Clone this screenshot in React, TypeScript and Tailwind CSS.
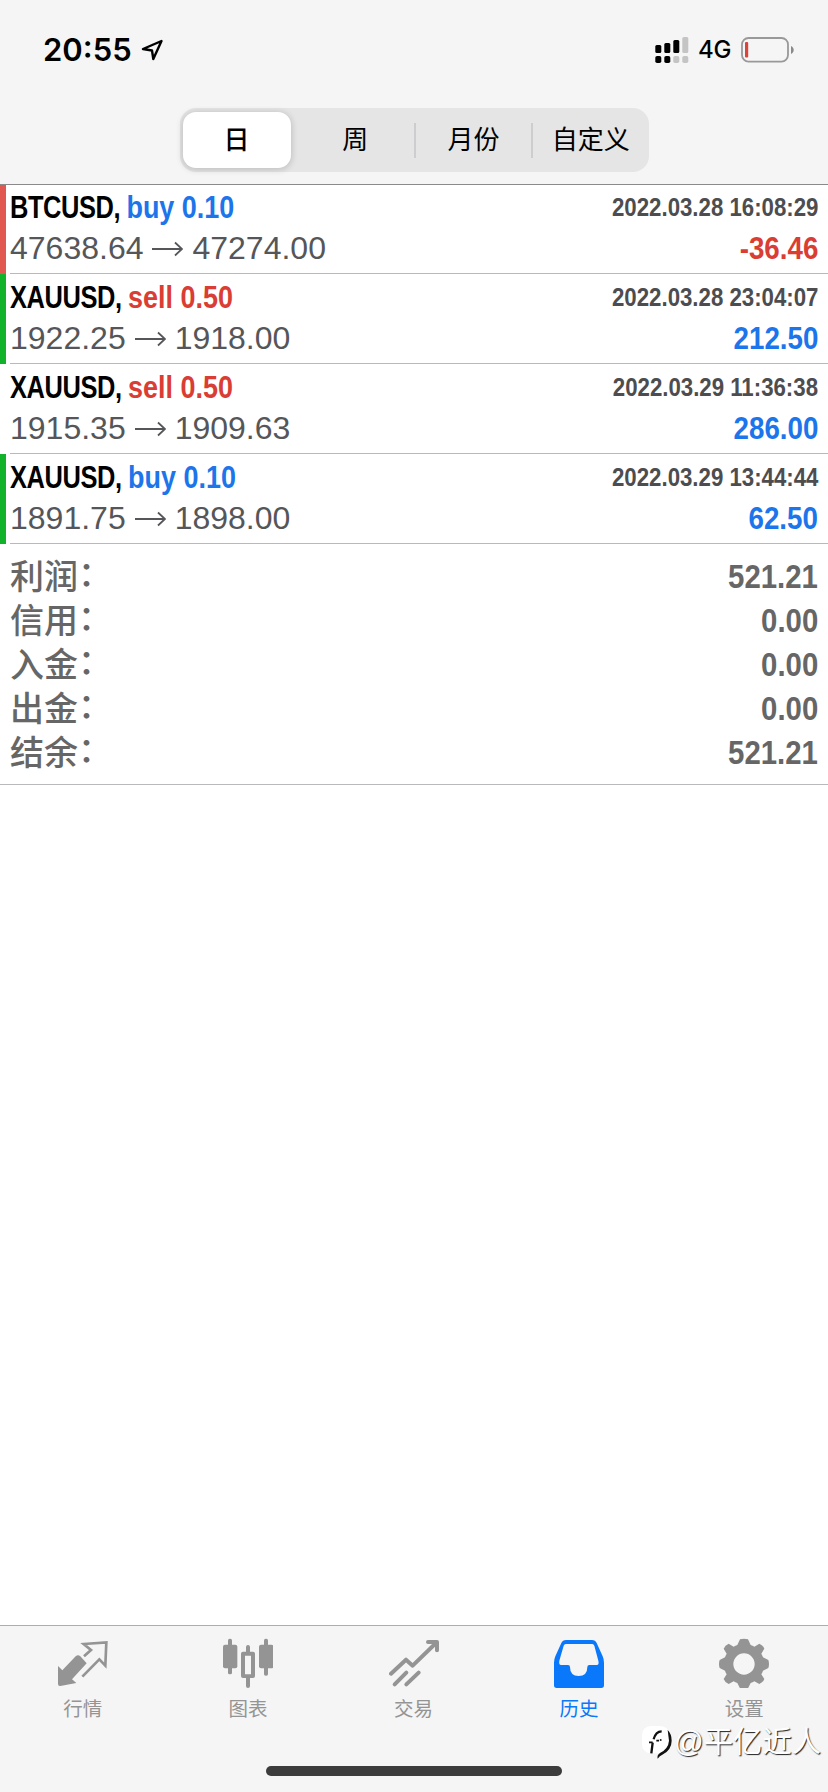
import { clsx } from "clsx";
import type { ReactNode } from "react";

const deals = [
  { symbol: "BTCUSD", side: "buy", volume: "0.10", open: "47638.64", close: "47274.00", time: "2022.03.28 16:08:29", profit: "-36.46", bar: "red" },
  { symbol: "XAUUSD", side: "sell", volume: "0.50", open: "1922.25", close: "1918.00", time: "2022.03.28 23:04:07", profit: "212.50", bar: "green" },
  { symbol: "XAUUSD", side: "sell", volume: "0.50", open: "1915.35", close: "1909.63", time: "2022.03.29 11:36:38", profit: "286.00", bar: "" },
  { symbol: "XAUUSD", side: "buy", volume: "0.10", open: "1891.75", close: "1898.00", time: "2022.03.29 13:44:44", profit: "62.50", bar: "green" },
] as const;

const totals = [
  { label: "利润", value: "521.21" },
  { label: "信用", value: "0.00" },
  { label: "入金", value: "0.00" },
  { label: "出金", value: "0.00" },
  { label: "结余", value: "521.21" },
];

const periods = ["日", "周", "月份", "自定义"];

function StatusBar() {
  return (
    <div className="flex h-[108px] justify-between pt-[27px] pr-[33px] pl-[43px] font-['Inter',sans-serif]">
      <div className="flex h-[46px] items-center">
        <span className="w-[98px] text-[31px] leading-[46px] font-semibold">20:55</span>
        <svg className="h-[22px] w-[22px]" viewBox="0 0 22 22" fill="none" stroke="#000" strokeWidth="2.4" strokeLinejoin="round">
          <path d="M20.5 2 L2 10 L11 11.5 L12.3 20 Z" />
        </svg>
      </div>
      <div className="flex h-[46px] items-center">
        <svg className="h-[26px] w-[34px]" viewBox="0 0 34 26">
          <rect x="0.3" y="8" width="6" height="8" rx="1.5" />
          <rect x="9.3" y="6" width="6" height="10" rx="1.5" />
          <rect x="18.3" y="3" width="6" height="13" rx="1.5" />
          <rect x="27.3" y="0" width="6" height="16" rx="1.5" fill="#c4c4c4" />
          <rect x="0.3" y="19" width="6" height="7" rx="1.8" />
          <rect x="9.3" y="19" width="6" height="7" rx="1.8" />
          <rect x="18.3" y="19" width="6" height="7" rx="1.8" fill="#c4c4c4" />
          <rect x="27.3" y="19" width="6" height="7" rx="1.8" fill="#c4c4c4" />
        </svg>
        <span className="ml-[9px] w-[43px] text-[24px] leading-[46px] font-medium tracking-[-0.2px]">4G</span>
        <svg className="h-[26px] w-[54px]" viewBox="0 0 54 26">
          <rect x="1" y="1" width="46" height="23.6" rx="6.5" fill="none" stroke="#999" strokeWidth="1.8" />
          <rect x="4" y="5" width="3.2" height="15.5" rx="1" fill="#d8453c" />
          <path d="M50 9 C53.6 10.5 53.6 15.5 50 17 Z" fill="#8a8a8a" />
        </svg>
      </div>
    </div>
  );
}

function PeriodPicker() {
  return (
    <div className="mx-auto flex h-16 w-[469px] rounded-[16px] bg-[#e5e5e6] text-[26px]">
      {periods.map((period, i) => (
        <div key={period} className="flex flex-1 items-center">
          {i > 1 && <div className="h-[35px] w-0.5 bg-[#cdcdcf]" />}
          <div
            className={clsx(
              "flex h-14 flex-1 items-center justify-center pt-px",
              i === 0 && "ml-[3px] mr-[6px] rounded-[13px] bg-white font-medium shadow-[0_1px_6px_1px_rgba(0,0,0,0.16)]",
            )}
          >
            {period}
          </div>
        </div>
      ))}
    </div>
  );
}

function DealRow({ deal, first }: { deal: (typeof deals)[number]; first: boolean }) {
  return (
    <div className={clsx("flex", first ? "h-[89px]" : "h-[90px]")}>
      <div className={clsx("w-1.5", deal.bar === "red" && "bg-[#e0584f]", deal.bar === "green" && "bg-[#12b32a]")} />
      <div className="ml-1 flex flex-1 flex-col justify-end border-b border-[#b9b9bb] pr-[10px] pb-1">
        <div className="flex h-[41px] items-center justify-between font-bold">
          <div className="origin-left scale-x-[0.82] text-[31px] leading-[41px] tracking-[-0.5px] whitespace-nowrap">
            {deal.symbol},{" "}
            <span
              className={clsx(
                "inline-block origin-left scale-x-[1.06] tracking-normal",
                deal.side === "buy" ? "text-[#1c75ea]" : "text-[#da3d33]",
              )}
            >
              {deal.side} {deal.volume}
            </span>
          </div>
          <div className="origin-right scale-x-[0.855] text-[26px] leading-[41px] whitespace-nowrap text-[#4d4d4f]">{deal.time}</div>
        </div>
        <div className="flex h-[41px] items-center justify-between">
          <div className="flex items-center text-[32px] leading-[41px] text-[#55565a]">
            {deal.open}
            <svg className="mx-[9px] h-4 w-[31px]" viewBox="0 0 31 16" fill="none" stroke="#55565a" strokeWidth="1.8">
              <path d="M0 8 H30 M23 1.5 L30 8 L23 14.5" />
            </svg>
            {deal.close}
          </div>
          <div
            className={clsx(
              "origin-right scale-x-[0.88] text-[31.5px] leading-[41px] font-bold",
              deal.profit.startsWith("-") ? "text-[#da3d33]" : "text-[#1c75ea]",
            )}
          >
            {deal.profit}
          </div>
        </div>
      </div>
    </div>
  );
}

function Tab({ label, box, active, children }: { label: string; box: string; active?: boolean; children: ReactNode }) {
  return (
    <div className={clsx("flex flex-1 flex-col items-center pt-3", active ? "text-[#0a78fa]" : "text-[#949494]")}>
      <svg className="h-[50px] w-[50px]" viewBox={box} fill="currentColor">
        {children}
      </svg>
      <span className="mt-[7px] text-[19.5px] leading-[28px]">{label}</span>
    </div>
  );
}

function TabBar() {
  return (
    <div className="relative flex h-[167px] flex-col justify-between border-t border-[#adadad] bg-[#f5f5f5] pb-4">
      <div className="flex pr-px">
        <Tab label="行情" box="171 84 150 150">
          <path d="M171 168 L184 181 L224 139 Q231 132 238 139 L257 160 L213 208 L226 219 L178 228 Q171 229 171 221 Z" />
          <path d="M249 139 L270 120 L248 102 L316 97 L313 167 L295 148 L244 200" fill="none" stroke="currentColor" strokeWidth="8" />
        </Tab>
        <Tab label="图表" box="669 84 150 150">
          <rect x="669" y="104" width="43" height="71" rx="6" />
          <rect x="684" y="86" width="12" height="107" rx="5" />
          <rect x="777" y="104" width="43" height="71" rx="6" />
          <rect x="792" y="86" width="12" height="111" rx="5" />
          <path d="M738 125 V111 Q738 105 744 105 Q750 105 750 111 V125 H759 Q765 125 765 131 V198 Q765 204 759 204 H750 V228 Q750 234 744 234 Q738 234 738 228 V204 H729 Q723 204 723 198 V131 Q723 125 729 125 Z M735 137 V193 H753 V137 Z" fillRule="evenodd" />
        </Tab>
        <Tab label="交易" box="264 84 150 150">
          <g fill="none" stroke="currentColor" strokeWidth="12" strokeLinecap="round" strokeLinejoin="round">
            <path d="M270 191 L315 149 L335 167 L405 99" />
            <path d="M381 96 H408 V121" />
            <path d="M281 223 L316 188 M316 223 L353 188" />
          </g>
        </Tab>
        <Tab label="历史" box="759 84 150 150" active>
          <path d="M795 90 H873 Q883 90 887 99 L905 139 Q909 148 909 158 V226 Q909 234 901 234 H767 Q759 234 759 226 V158 Q759 148 763 139 L781 99 Q785 90 795 90 Z M794 102 Q790 102 788 107 L775 152 Q773 165 780 165 H801 Q807 165 807 171 Q807 198 833 198 Q859 198 859 171 Q859 165 865 165 H887 Q895 165 892 152 L880 107 Q878 102 874 102 Z" fillRule="evenodd" />
        </Tab>
        <Tab label="设置" box="357 84 150 150">
          <path
            d="M420 88 Q432 85 444 88 L452 105 Q458 107 463 110 L478 101 Q489 105 493 116 L484 131 Q487 136 489 142 L505 150 Q509 162 505 174 L489 182 Q487 188 484 193 L493 207 Q489 218 478 222 L463 214 Q458 217 452 219 L444 235 Q432 238 420 235 L412 219 Q406 217 401 214 L386 222 Q375 218 371 207 L380 193 Q377 188 375 182 L359 174 Q355 162 359 150 L375 142 Q377 136 380 131 L371 116 Q375 105 386 101 L401 110 Q406 107 412 105 Z M432 130 A32 32 0 1 0 432 194 A32 32 0 1 0 432 130 Z"
            fillRule="evenodd"
          />
        </Tab>
      </div>
      <div className="mx-auto h-[10px] w-[296px] rounded-full bg-[#3c3c3c]" />
      <div className="absolute top-[98px] right-[7px] flex items-center">
        <svg className="h-[36px] w-[33px]" viewBox="0 0 99 108">
          <rect x="3" y="6" width="82" height="82" rx="26" fill="#fff" />
          <path d="M31 88 L35 56 M38 46 Q44 22 62 22" fill="none" stroke="#111" strokeWidth="7" />
          <path d="M24 55 H35 M46 50 H54" fill="none" stroke="#111" strokeWidth="5" />
          <path d="M80 18 Q92 30 92 50 Q92 78 64 92 Q56 95 50 104 Q47 92 58 86 Q82 74 84 50 Z" fill="#111" />
          <circle cx="59" cy="48" r="3" fill="#222" />
        </svg>
        <span className="text-[29.3px] leading-[36px] text-white [text-shadow:1px_1px_1px_#222]">@平亿近人</span>
      </div>
    </div>
  );
}

export default function App() {
  return (
    <div className="flex h-[1792px] w-[828px] flex-col bg-white font-['Liberation_Sans','Noto_Sans_CJK_SC',sans-serif] text-black">
      <header className="h-[185px] border-b border-[#8a8a8a] bg-[#f5f5f5]">
        <StatusBar />
        <PeriodPicker />
      </header>

      <main className="flex-1">
        {deals.map((deal, i) => (
          <DealRow key={deal.time} deal={deal} first={i === 0} />
        ))}
        <div className="h-[241px] border-b border-[#b9b9bb] pt-[11px] pr-[10px] pl-[10px] text-[#666]">
          {totals.map((row) => (
            <div key={row.label} className="flex h-11 items-center justify-between">
              <div className="text-[34px] leading-[44px] font-medium">
                {row.label}
                <span className="relative -top-[3px]">：</span>
              </div>
              <div className="origin-right scale-x-[0.89] text-[33px] leading-[44px] font-bold">{row.value}</div>
            </div>
          ))}
        </div>
      </main>

      <TabBar />
    </div>
  );
}
